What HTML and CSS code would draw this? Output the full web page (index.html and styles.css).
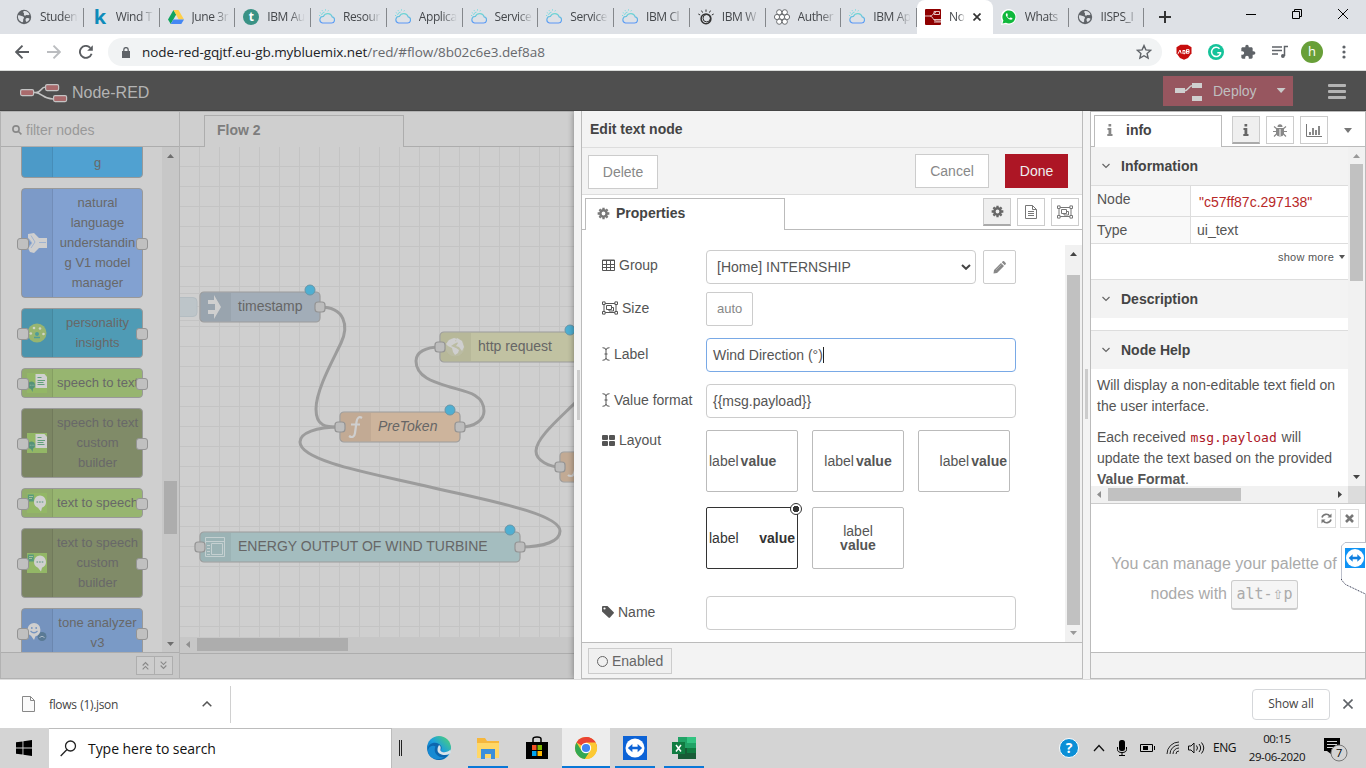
FILE: index.html
```html
<!DOCTYPE html>
<html lang="en">
<head>
<meta charset="utf-8">
<title>Node-RED</title>
<link rel="stylesheet" href="styles.css">
</head>
<body>
<svg class="defs" width="0" height="0" aria-hidden="true">
  <defs>
    <linearGradient id="cloudg" x1="0" y1="0" x2="0" y2="1"><stop offset="0" stop-color="#6fd6d3"/><stop offset="1" stop-color="#5a96f7"/></linearGradient>
    <linearGradient id="edgeg" x1="0" y1="1" x2="1" y2="0"><stop offset="0" stop-color="#0c59a4"/><stop offset=".5" stop-color="#1a9de0"/><stop offset="1" stop-color="#54d86a"/></linearGradient>
  </defs>
  <symbol id="globe" viewBox="0 0 16 16"><circle cx="8" cy="8" r="7.2" fill="#5f6368"/><path d="M2 6.500c1.500-1 3 .3 4.500.8s2 1.500 1 2.500.5 2.500-1 3.500c-3-.8-5-3.500-4.500-6.800zM7.500 2.200c2.500-.8 5 .8 6 3.300-1.500 1.500-2.500 0-3.500.8s-2.500.2-2-1.300-1.500-1.200-.5-2.800zM10 9.500c1.500-.8 3-.3 3.500.3-.5 1.700-1.500 2.700-3 3.200-.8-1-1.500-2.500-.5-3.500z" fill="#dee1e6"/></symbol>
  <symbol id="cloud" viewBox="0 0 16 16"><path d="M3.500 14h9a3.100 3.100 0 0 0 .7-6.100A4.700 4.700 0 0 0 4.500 7.300a3.400 3.400 0 0 0-1 6.700z" fill="none" stroke="url(#cloudg)" stroke-width="1.200"/><path d="M2.500 6a3.500 3.500 0 0 1 3-2.800M.8 3.500l1 .6M3 1.200l.7 1M6.500.3v1.300M9.500 1.300l-.7 1M0 6.500h1.200" stroke="#7cdbe0" fill="none"/></symbol>
  <symbol id="group" viewBox="0 0 16 14"><path d="M2 2.500h12v9H2z" fill="none" stroke="currentColor"/><path d="M4.500 4.500h5v4h-5zM10 6.500h1.500v3.500H7V9" fill="none" stroke="currentColor"/><path d="M.5.9h2.600v2.600H.5zM12.900.9h2.600v2.600h-2.600zM.5 10.500h2.600v2.600H.5zM12.900 10.500h2.600v2.600h-2.600z" fill="#fff" stroke="currentColor"/></symbol>
  <symbol id="cog" viewBox="0 0 14 14"><circle cx="7" cy="7" r="3.400" fill="none" stroke="currentColor" stroke-width="2.700"/><path d="M7 .7v2.300M.7 7H3M2.600 2.600L4 4M11.400 2.600L10 4M7 13.300v-2.300M13.300 7H11M11.400 11.400L10 10M2.600 11.400L4 10" stroke="currentColor" stroke-width="2.500"/></symbol>
  <symbol id="ibeam" viewBox="0 0 8 14"><path d="M.5.700Q4 .7 4 3v8q0 2.300-3.500 2.300M7.500.700Q4 .7 4 3M7.500 13.300Q4 13.300 4 11M2.500 7h3" fill="none" stroke="currentColor"/></symbol>
  <symbol id="info" viewBox="0 0 6 12"><path d="M1.500 0h2.700v2.400H1.500zM.5 4h3.800v6h1.200v2H.3v-2h1.200V6H.5z" fill="currentColor"/></symbol>
  <symbol id="chev" viewBox="0 0 10 6"><path d="M1.500 1L5 4.500 8.500 1" fill="none" stroke="currentColor" stroke-width="1.200"/></symbol>
  <symbol id="arrows" viewBox="0 0 24 24"><path d="M2.500 12l6-5.500v3.700h7V6.500l6 5.500-6 5.500v-3.700h-7v3.700z" fill="currentColor"/></symbol>
  <symbol id="doc" viewBox="0 0 20 20"><path d="M8.500 1h9L20 4v11H8.500z" fill="#d0d0d0"/><path d="M10.500 4.500h4M10.500 7.500h7.500M10.500 9.500h6M10.500 11.500h7" stroke="#62a07b"/><path d="M5 8.500a3.800 3.800 0 0 1 1 7.200L5.500 19l-1.500-3A3.800 3.800 0 0 1 5 8.500z" fill="#55937a"/><path d="M2.800 12.200h5" stroke="#9ab5a8" stroke-dasharray="1 .8"/></symbol>
  <symbol id="talk" viewBox="0 0 20 20"><path d="M.8 1.500h6v7h-6z" fill="#589b7b"/><path d="M2 3.500h4M2 5.500h3" stroke="#a7bc99"/><path d="M13 2.500a6.400 6.400 0 0 1 2 12.300L14 18.500l-3-3.700A6.400 6.400 0 0 1 13 2.500z" fill="#d0d0d0"/><path d="M9.500 9h7.500" stroke="#55937a" stroke-width="1.200" stroke-dasharray="1.600 1"/></symbol>
</svg>

<div class="tabs">
  <div class="tab"><svg><use href="#globe"/></svg><span>Studen</span></div>
  <div class="tab"><b class="kicon">k</b><span>Wind T</span></div>
  <div class="tab"><svg viewBox="0 0 16 16"><path d="M5.500 1L0 10.500 2.700 15 8.200 5.500z" fill="#11a45f"/><path d="M5.500 1h5L16 10.500h-5.300z" fill="#ffcf48"/><path d="M5.400 10.500H16L13.300 15H2.700z" fill="#4587f4"/></svg><span>June 3r</span></div>
  <div class="tab"><i class="ticon">t</i><span>IBM Au</span></div>
  <div class="tab"><svg><use href="#cloud"/></svg><span>Resour</span></div>
  <div class="tab"><svg><use href="#cloud"/></svg><span>Applica</span></div>
  <div class="tab"><svg><use href="#cloud"/></svg><span>Service</span></div>
  <div class="tab"><svg><use href="#cloud"/></svg><span>Service</span></div>
  <div class="tab"><svg><use href="#cloud"/></svg><span>IBM Cl</span></div>
  <div class="tab"><svg viewBox="0 0 16 16" fill="none" stroke="#333"><circle cx="8" cy="9.800" r="4.900" stroke-width="1.500"/><circle cx="8.700" cy="9.200" r="3.700"/><path d="M8 2.800V.5M4.600 3.600L3.500 1.600M11.400 3.600l1.100-2M2.200 6L.3 5M13.800 6l1.900-1"/></svg><span>IBM W</span></div>
  <div class="tab"><svg viewBox="0 0 16 16" fill="#fff" stroke="#6a6d70"><circle cx="5.200" cy="3.300" r="2.600"/><circle cx="10.800" cy="3.300" r="2.600"/><circle cx="3" cy="8" r="2.600"/><circle cx="13" cy="8" r="2.600"/><circle cx="5.200" cy="12.700" r="2.600"/><circle cx="10.800" cy="12.700" r="2.600"/><circle cx="8" cy="8" r="2.600"/></svg><span>Auther</span></div>
  <div class="tab"><svg><use href="#cloud"/></svg><span>IBM Ap</span></div>
  <div class="tab active"><svg viewBox="0 0 16 16"><rect width="16" height="16" rx="1" fill="#8f0000"/><path d="M0 7h5c3 0 3-3.500 6-3.500M5 7c3 0 3 5 6 5h5M9 2.500h5.500v3H9zM9 10.500h7M9 13h7" fill="none" stroke="#e6c4c4"/></svg><span class="short">No</span><svg class="x" viewBox="0 0 8 8"><path d="M.5.5l7 7M7.500.5l-7 7" stroke="#333" stroke-width="1.700"/></svg></div>
  <div class="tab"><svg viewBox="0 0 16 16"><path d="M0 16l1-4A7.800 7.800 0 1 1 4.500 15z" fill="#fff"/><path d="M1.500 14.500l.9-3.100a6.500 6.500 0 1 1 2.500 2.300z" fill="#10b83c"/><path d="M5.500 4.200c-1 .7-1 2.300.8 4.400s4 3 5.200 1.500l-.3-1-1.800-.7-.9.900c-1-.3-2-1.300-2.300-2.300l.7-.8-.7-1.900z" fill="#fff"/></svg><span>Whats</span></div>
  <div class="tab"><svg><use href="#globe"/></svg><span>IISPS_I</span></div>
  <svg class="plus" viewBox="0 0 12 12"><path d="M6 0v12M0 6h12" stroke="#333" stroke-width="2"/></svg>
  <div class="winbtns">
    <svg viewBox="0 0 10 10"><path d="M0 5.500h10" stroke="#000"/></svg>
    <svg viewBox="0 0 10 10" fill="none" stroke="#000"><path d="M.5 2.500h7v7h-7zM2.500 2.500v-2h7v7h-2"/></svg>
    <svg viewBox="0 0 10 10"><path d="M0 0l10 10M10 0L0 10" stroke="#000"/></svg>
  </div>
</div>

<div class="toolbar">
  <svg class="nav" viewBox="0 0 14 14" fill="none" stroke="#5a5d61" stroke-width="1.900"><path d="M14 7H1.500M7.500.7L1.200 7l6.300 6.300"/></svg>
  <svg class="nav" viewBox="0 0 14 14" fill="none" stroke="#bbbdc0" stroke-width="1.900"><path d="M0 7h12.500M6.500.7L12.800 7l-6.300 6.300"/></svg>
  <svg class="nav" viewBox="0 0 14 14" fill="none" stroke="#5a5d61" stroke-width="1.900"><path d="M12.600 8.800A6 6 0 1 1 11.300 2.800"/><path d="M13.800.2v5.600H8.200z" fill="#5a5d61" stroke="none"/></svg>
  <div class="omni">
    <svg class="lock" viewBox="0 0 8 11"><path d="M0 4h8v7H0z" fill="#5f6368"/><path d="M1.800 4V2.800a2.200 2.200 0 0 1 4.400 0V4" fill="none" stroke="#5f6368" stroke-width="1.300"/></svg>
    <span class="url">node-red-gqjtf.eu-gb.mybluemix.net<em>/red/#flow/8b02c6e3.def8a8</em></span>
    <svg class="star" viewBox="0 0 16 16"><path d="M8 1.600l1.900 4.300 4.700.5-3.500 3.100 1 4.600L8 11.700l-4.100 2.400 1-4.600L1.400 6.400l4.700-.5z" fill="none" stroke="#5f6368" stroke-width="1.400"/></svg>
  </div>
  <div class="exts">
    <svg viewBox="0 0 16 16"><path d="M4.500.8h7l4 2.500v6L12 14l-4 1.700L4 14 .5 9.300v-6z" fill="#c70d0d"/><path d="M2 9.800L4 6l1.200 3.500M7 6v4M7 6.500h2v3.200H7.500M10.500 5.500v4M10.500 5.700h2.500v3.500h-2.500M10.500 7.500h2.500" stroke="#fff" fill="none"/></svg>
    <svg viewBox="0 0 16 16"><circle cx="8" cy="8" r="8" fill="#15c39a"/><path d="M11.500 4.800A4.600 4.600 0 1 0 12.500 9.500V8.700H9.300" fill="none" stroke="#fff" stroke-width="1.500"/></svg>
    <svg viewBox="0 0 24 24"><path fill="#5f6368" d="M20.500 11H19V7c0-1.100-.9-2-2-2h-4V3.500C13 2.100 11.900 1 10.500 1S8 2.100 8 3.500V5H4c-1.100 0-2 .9-2 2v3.800h1.500c1.500 0 2.700 1.200 2.700 2.700S5 16.200 3.500 16.200H2V20c0 1.100.9 2 2 2h3.800v-1.500c0-1.500 1.200-2.700 2.700-2.700s2.700 1.200 2.700 2.700V22H17c1.100 0 2-.9 2-2v-4h1.500c1.400 0 2.500-1.100 2.500-2.500S21.900 11 20.500 11z"/></svg>
    <svg viewBox="0 0 16 16" fill="none" stroke="#5f6368" stroke-width="1.500"><path d="M0 3h10M0 6.500h10M0 10h6M12.500 12V2.500H16"/><circle cx="10.900" cy="12" r="1.900" fill="#5f6368" stroke="none"/></svg>
    <b class="avatar">h</b>
    <svg class="dots" viewBox="0 0 4 14" fill="#5f6368"><circle cx="2" cy="2" r="1.600"/><circle cx="2" cy="7" r="1.600"/><circle cx="2" cy="12" r="1.600"/></svg>
  </div>
</div>

<header class="nrhead">
  <svg class="logo" viewBox="0 0 48 20"><g fill="none" stroke="#c4c4c4" stroke-width="1.200"><path d="M14 9.500h2c6 0 4-5.500 10-5.500M15 9.500c7 0 8 6.500 18 6.500" stroke-width="1.600"/><g fill="#a96a6c"><rect x=".6" y="6.600" width="13" height="6" rx="1.500"/><rect x="25.600" y="1.600" width="13" height="6" rx="1.500"/><rect x="33.600" y="12.600" width="13" height="6" rx="1.500"/></g></g></svg>
  <span class="brand">Node-RED</span>
  <button class="deploy"><svg viewBox="0 0 27 18"><path d="M0 5h10v5H0zM17 0h10v5H17zM17 13h10v5H17z" fill="#cfcfcf"/><path d="M9 8c5 0 4-5.500 9-5.500" fill="none" stroke="#cfcfcf" stroke-width="1.300"/></svg><span>Deploy</span><i class="caret"></i></button>
  <div class="burger"><i></i><i></i><i></i></div>
</header>

<main class="work">
  <section class="palette">
    <div class="filter"><svg viewBox="0 0 10 10" fill="none" stroke="#888" stroke-width="1.600"><circle cx="4" cy="4" r="3.100"/><path d="M6.200 6.200l3.200 3.200"/></svg>filter nodes</div>
    <div class="pbody">
      <div class="plist">
        <div class="pn c0"><i></i><p><br>g</p></div>
        <div class="pn c1 port"><i><svg viewBox="0 0 20 20"><path d="M1 1l6-1 5 5h8v10h-8l-5 5-4-1-2-4 4-5-4-5z" fill="#cfcfcf"/><path d="M1 5l4 5-4 5M4 2.500L8 9l-4 6M12 9.500h7" stroke="#9fb3d1" fill="none"/></svg></i><p>natural<br>language<br>understandin<br>g V1 model<br>manager</p></div>
        <div class="pn c2 port"><i><svg viewBox="0 0 20 20"><circle cx="10" cy="10" r="9.500" fill="#97b570"/><g fill="#cfd5c5"><circle cx="7" cy="5" r="1.300"/><circle cx="13" cy="5.500" r="1.300"/><circle cx="3.800" cy="10.500" r="1.300"/><circle cx="16.500" cy="11" r="1.300"/></g><circle cx="10" cy="11" r="2" fill="#509c99"/><path d="M7 14.500h6" stroke="#509c99" stroke-width="1.500"/></svg></i><p>personality<br>insights</p></div>
        <div class="pn c3 port"><i><svg class="g"><use href="#doc"/></svg></i><p>speech to text</p></div>
        <div class="pn c4 port"><i><svg class="g"><use href="#doc"/></svg></i><p>speech to text<br>custom<br>builder</p></div>
        <div class="pn c3 port"><i><svg class="g"><use href="#talk"/></svg></i><p>text to speech</p></div>
        <div class="pn c4 port"><i><svg class="g"><use href="#talk"/></svg></i><p>text to speech<br>custom<br>builder</p></div>
        <div class="pn c5 port"><i><svg viewBox="0 0 20 20"><circle cx="15" cy="13.500" r="4.500" fill="#5a7a95"/><path d="M12.500 14.500q2.500-2.500 5 0" stroke="#a9b8c6" fill="none"/><path d="M7 0a6.800 6.800 0 0 1 1.500 13.300L7 17l-3-4.300A6.800 6.800 0 0 1 7 0z" fill="#cfcfcf"/><circle cx="4.800" cy="5" r=".9" fill="#7795bf"/><circle cx="9.200" cy="5" r=".9" fill="#7795bf"/><path d="M3.500 8q3.500 3.500 7 0" fill="none" stroke="#7795bf" stroke-width="1.200"/></svg></i><p>tone analyzer<br>v3</p></div>
      </div>
      <div class="vbar dim"><i class="up"></i><b class="pthumb"></b><i class="down"></i></div>
    </div>
    <div class="pfoot"><svg viewBox="0 0 18 18"><path d="M6 9l3-3 3 3M6 13l3-3 3 3"/></svg><svg viewBox="0 0 18 18"><path d="M6 5l3 3 3-3M6 9l3 3 3-3"/></svg></div>
  </section>

  <section class="flow">
    <div class="ftabs"><b>Flow 2</b></div>
    <svg class="canvas" viewBox="180 147 394 490" width="394" height="490">
      <defs><pattern id="grid" width="20" height="20" patternUnits="userSpaceOnUse" x="199" y="166"><path d="M.5 0v20M0 .5h20" stroke="#c4c4c4"/></pattern></defs>
      <rect x="180" y="147" width="394" height="490" fill="url(#grid)"/>
      <g fill="none" stroke="#9c9c9c" stroke-width="3">
        <path d="M320 307C345 307 349 326 341 343S316 390 316 409S328 427 340 427"/>
        <path d="M460 427C476 427 484 419 484 411C484 393 463 391 450 387S416 378 416 361C416 352 426 347 440 347"/>
        <path d="M520 547C545 547 560 541 560 531C560 513 480 499 430 487S300 462 300 442C300 433 316 427 340 427"/>
        <path d="M576 402C560 418 536 438 536 451C536 461 550 467 560 467"/>
      </g>
      <rect x="170" y="297.500" width="27" height="19" rx="4" fill="#bdc5c9" stroke="#b4bdc2"/><path d="M180 293.500h20M180 320.500h20" stroke="#c4c4c4"/>
      <g stroke="#9c9c9c" stroke-width="1.200">
        <rect x="200" y="292" width="120" height="30" rx="4" fill="#a2adb8"/>
        <rect x="340" y="412" width="120" height="30" rx="4" fill="#cdb49c"/>
        <rect x="440" y="332" width="160" height="30" rx="4" fill="#c1c2a2"/>
        <rect x="560" y="452" width="60" height="30" rx="4" fill="#cdb49c"/>
        <rect x="200" y="532" width="320" height="30" rx="4" fill="#a4bdbf"/>
      </g>
      <g fill="#000" fill-opacity=".05"><path d="M201 293h29v28h-29zM341 413h29v28h-29zM441 333h29v28h-29zM561 453h13v28h-13zM201 533h29v28h-29z"/></g>
      <path d="M230.500 293v28M370.500 413v28M470.500 333v28M230.500 533v28" stroke="#000" stroke-opacity=".05"/>
      <g fill="#cfcfcf">
        <path d="M208 300h6v-5l7 12-7 12v-5h-6v-4h7v-6h-7z"/>
        <circle cx="455" cy="347" r="9.500" fill-opacity=".2"/><path d="M446 344l3-4 5-2 3 1-2 2 3 1-4 2-3 2 5 2 3 2-1 3-3 2-2-3-1-4-4-2zM457 338l5 3 2 6-2 4-3-4-3-1 2-3-2-2z"/>
      </g>
      <g fill="none" stroke="#cfcfcf" stroke-width="2.200"><path d="M362 418c-3-2-5 0-5.500 4l-1.500 11c-.5 4-3 5-6 3M351 424.500h9"/><path d="M576 464c-1 6-1 12-5 12q-2 0-3-1"/></g>
      <g fill="none" stroke="#c5d0d1"><path d="M205.500 537.500h19v19h-19zM205 541.500h20M211.500 543.500h11v11h-11zM207 545.500h3M207 548.500h3M207 551.500h3M207 554.500h3"/></g>
      <g fill="#bdbdbd" stroke="#949494" stroke-width="1.200">
        <rect x="315" y="302" width="10" height="10" rx="3"/><rect x="335" y="422" width="10" height="10" rx="3"/><rect x="455" y="422" width="10" height="10" rx="3"/><rect x="435" y="342" width="10" height="10" rx="3"/><rect x="555" y="462" width="10" height="10" rx="3"/><rect x="195" y="542" width="10" height="10" rx="3"/><rect x="515" y="542" width="10" height="10" rx="3"/>
      </g>
      <g fill="#4eafd2" stroke="#6896a8"><circle cx="310" cy="290" r="5"/><circle cx="450" cy="410" r="5"/><circle cx="570" cy="330" r="5"/><circle cx="510" cy="530" r="5"/></g>
      <g class="nlabels"><text x="238" y="311">timestamp</text><text x="378" y="431" font-style="italic">PreToken</text><text x="478" y="351">http request</text><text x="238" y="551">ENERGY OUTPUT OF WIND TURBINE</text></g>
    </svg>
    <div class="hbar dim"><i class="left"></i><b class="fthumb"></b></div>
    <div class="ffoot"></div>
  </section>

  <div class="grip"><i></i></div>

  <section class="tray">
    <h2>Edit text node</h2>
    <div class="tbtns"><button>Delete</button><button class="cancel">Cancel</button><button class="done">Done</button></div>
    <div class="ttabs">
      <div class="ptab"><svg viewBox="0 0 14 14"><use href="#cog"/></svg>Properties</div>
      <div class="tools">
        <span class="on"><svg width="13" height="13"><use href="#cog"/></svg></span>
        <span><svg width="12" height="14" viewBox="0 0 12 14" fill="none" stroke="#777"><path d="M.5.5h7l4 4v9H.5zM7.500.5v4h4M3 6.500h6M3 8.500h6M3 10.500h6"/></svg></span>
        <span><svg width="16" height="14"><use href="#group"/></svg></span>
      </div>
    </div>
    <div class="tbody">
      <form class="form">
        <div class="row"><label><svg width="13" height="12" viewBox="0 0 13 12"><path d="M.5 1h12v10.500H.5zM0 1.500h13M.5 5.500h12M.5 8.500h12M4.500 1v10M8.500 1v10" fill="none" stroke="#555"/></svg>Group</label><div class="box select">[Home] INTERNSHIP<svg viewBox="0 0 10 6"><path d="M1 1l4 3.800L9 1" fill="none" stroke="#444" stroke-width="2"/></svg></div><div class="box pencil"><svg width="13" height="13" viewBox="0 0 13 13"><path d="M1 9l7-7 3 3-7 7-3.500.500zM8.800 1.300l1-1q.7-.5 1.300 0l1.600 1.600q.5.600 0 1.300l-1 1z" fill="#888"/><path d="M3 9l5.500-5.500" stroke="#bbb" stroke-width=".7"/></svg></div></div>
        <div class="row size"><label><svg width="16" height="14"><use href="#group"/></svg>Size</label><div class="box auto">auto</div></div>
        <div class="row"><label><svg width="8" height="14"><use href="#ibeam"/></svg>Label</label><div class="box input focus">Wind Direction (°)<i></i></div></div>
        <div class="row"><label><svg width="8" height="14"><use href="#ibeam"/></svg>Value format</label><div class="box input">{{msg.payload}}</div></div>
        <div class="row lay"><label><svg width="13" height="11" viewBox="0 0 13 11" fill="#555"><rect width="6" height="5" rx="1"/><rect x="7" width="6" height="5" rx="1"/><rect y="6" width="6" height="5" rx="1"/><rect x="7" y="6" width="6" height="5" rx="1"/></svg>Layout</label>
          <div class="layouts">
            <div><span>label</span><b>value</b></div><div class="mid"><span>label</span><b>value</b></div><div class="end"><span>label</span><b>value</b></div>
            <div class="sel"><span>label</span><b>value</b><i></i></div><div class="stack"><span>label</span><b>value</b></div>
          </div></div>
        <div class="row"><label><svg width="12" height="12" viewBox="0 0 12 12"><path d="M0 1q0-1 1-1h4.500l6 6q1 .8 0 1.600L8 11.500q-.8.800-1.500 0L0 5.500z" fill="#555"/><circle cx="2.500" cy="2.500" r="1.100" fill="#fff"/></svg>Name</label><div class="box input"></div></div>
      </form>
      <div class="vbar tscroll"><i class="up dark"></i><b></b><i class="down mutedarrow"></i></div>
    </div>
    <div class="tfoot"><span><i></i>Enabled</span></div>
  </section>

  <div class="grip right"><i></i></div>

  <aside class="side">
    <div class="stabs">
      <div class="itab"><svg width="6" height="12"><use href="#info"/></svg>info</div>
      <div class="tools">
        <span class="on"><svg width="6" height="12"><use href="#info"/></svg></span>
        <span><svg width="14" height="13" viewBox="0 0 14 13"><path d="M4.500 3a2.500 2.700 0 0 1 5 0z" fill="#888"/><path d="M3 4h8v6q-1 2.500-4 2.500T3 10z" fill="#888"/><path d="M1 2.500L4 5M13 2.500L10 5M0 7.500h14M1 12.500l3-3M13 12.500l-3-3" stroke="#888" stroke-width="1.200"/><path d="M7 5v7" stroke="#fff"/></svg></span>
        <span><svg width="16" height="13" viewBox="0 0 16 13"><path d="M.5 0v12.500H16" fill="none" stroke="#777"/><path d="M4 11V8M7 11V4M10 11V6M13 11V2" stroke="#888" stroke-width="2"/></svg></span>
        <i class="caret"></i>
      </div>
    </div>
    <div class="sbody">
      <div class="scontent">
        <h3 class="first"><svg><use href="#chev"/></svg>Information</h3>
        <div class="kv"><span>Node</span><span class="red">"c57ff87c.297138"</span></div>
        <div class="kv type"><span>Type</span><span>ui_text</span></div>
        <div class="more">show more<i></i></div>
        <h3><svg><use href="#chev"/></svg>Description</h3>
        <h3 class="help"><svg><use href="#chev"/></svg>Node Help</h3>
        <div class="text"><p>Will display a non-editable text field on<br>the user interface.</p><p>Each received <code>msg.payload</code> will<br>update the text based on the provided<br><b>Value Format</b>.</p></div>
      </div>
      <div class="vbar sscroll"><i class="up mutedarrow"></i><b></b><i class="down dark"></i></div>
    </div>
    <div class="hbar shs"><i class="left"></i><b></b><i class="right"></i><u></u></div>
    <div class="tips">
      <div class="tipbtns"><span><svg width="11" height="11" viewBox="0 0 11 11" fill="none" stroke="#777" stroke-width="1.600"><path d="M1 4.500a4.500 4.500 0 0 1 8-1.300M10 6.500a4.500 4.500 0 0 1-8 1.300"/><path d="M10.500.5v4h-4zM.5 10.500v-4h4z" fill="#777" stroke="none"/></svg></span><span><svg width="9" height="9" viewBox="0 0 9 9"><path d="M1 1l7 7M8 1L1 8" stroke="#777" stroke-width="2.600"/></svg></span></div>
      <p>You can manage your palette of<br>nodes with <kbd>alt-<span>⇧</span>p</kbd></p>
    </div>
    <div class="sfoot"></div>
  </aside>
  <div class="tv"><svg width="25" height="53" viewBox="0 0 25 53"><path d="M26 .5H4L.5 4v34l4 4.500 21 10" fill="#fff" stroke="#bcc0cc"/><path d="M.5 37v1l4 4.500 21 10" fill="none" stroke="#445" stroke-dasharray="1 2"/><rect x="4" y="6" width="20" height="20" fill="#0f93f5"/><circle cx="14" cy="16" r="9" fill="#fff"/><use href="#arrows" x="6" y="8" width="16" height="16" color="#1180e0"/></svg></div>
</main>

<div class="dl">
  <div class="file"><svg width="13" height="16" viewBox="0 0 13 16"><path d="M.5.5h8l4 4v11H.5zM8.500.5v4h4" fill="#fafafa" stroke="#888"/></svg><span>flows (1).json</span><svg class="upc" viewBox="0 0 10 6"><path d="M.7 5.300L5 1l4.300 4.300" fill="none" stroke="#555" stroke-width="1.500"/></svg></div>
  <div class="showall">Show all</div>
  <svg class="dx" viewBox="0 0 10 10"><path d="M.5.5l9 9M9.500.5l-9 9" stroke="#5f6368" stroke-width="1.600"/></svg>
</div>

<footer class="taskbar">
  <div class="start"><svg width="16" height="16" viewBox="0 0 16 16"><path d="M0 2.300L6.500 1.400v6.100H0zM7.400 1.300L16 0v7.500H7.400zM0 8.400h6.500v6.200L0 13.700zM7.400 8.400H16V16l-8.600-1.200z"/></svg></div>
  <div class="search"><svg width="17" height="17" viewBox="0 0 17 17" fill="none" stroke="#222" stroke-width="1.300"><circle cx="10.500" cy="6" r="5"/><path d="M7 9.500L.7 16"/></svg>Type here to search</div>
  <div class="handle"></div>
  <div class="apps">
    <span><svg viewBox="0 0 24 24"><circle cx="12" cy="12" r="12" fill="url(#edgeg)"/><path d="M1 15C0 8 7 5 12 8c3 2 3 4 2 6 0 2 3 3.500 9 1.500-3 8-12 11-17 6-3-3-2-8 1-10" fill="#0c66ae"/><path d="M8.500 10.500c-3 6 3 12 9 10.500-6 4.500-17 2-16.500-7C2 9.500 7 9 8.500 10.500z" fill="#168ad3"/><path d="M12 9c3 2 1 4 1.500 5.500 1 2.500 7 2.500 10-1 1 4 0 3-1 4.500-4 2-12 1-12-4 0-2 .5-3.500 1.500-5z" fill="#d8e4ea"/></svg></span>
    <span class="run"><svg viewBox="0 0 24 24"><path d="M1 2h8l2 3h12v16H1z" fill="#f6b73c"/><path d="M1 7h22v15H1z" fill="#ffd767"/><path d="M5 13h14v10h-4v-5H9v5H5z" fill="#3b8fdb"/></svg></span>
    <span><svg viewBox="0 0 24 24"><path d="M1 6h22v17H1z"/><path d="M8 6V3q0-2 4-2t4 2v3" fill="none" stroke="#000" stroke-width="1.500"/><path d="M7 9h4.500v5H7z" fill="#f25022"/><path d="M12.500 9H17v5h-4.500z" fill="#7fba00"/><path d="M7 15h4.500v5H7z" fill="#00a4ef"/><path d="M12.500 15H17v5h-4.500z" fill="#ffb900"/></svg></span>
    <span class="run cur"><svg viewBox="0 0 24 24"><circle cx="12" cy="12" r="11" fill="#fcc934"/><path d="M12 12H23A11 11 0 0 0 2.500 6.500z" fill="#ea4335"/><path d="M12 1a11 11 0 0 1 9.500 5.500H12z" fill="#ea4335"/><path d="M2.500 6.500A11 11 0 0 0 11 23l5.500-8.500H7.500z" fill="#34a853"/><path d="M21.500 6.500H12l4.500 8L11 23A11 11 0 0 0 21.500 6.500z" fill="#fcc934"/><circle cx="12" cy="12" r="5.200" fill="#fff"/><circle cx="12" cy="12" r="4.100" fill="#4285f4"/></svg></span>
    <span class="run"><svg viewBox="0 0 24 24"><path d="M0 0h24v24H0z" fill="#0d63d6"/><circle cx="12" cy="12" r="9.500" fill="#fff"/><use href="#arrows" x="3" y="3" width="18" height="18" color="#0d63d6"/></svg></span>
    <span class="run"><svg viewBox="0 0 24 24"><path d="M6 1h9v11H6z" fill="#21a366"/><path d="M15 1h9v6h-9z" fill="#33c481"/><path d="M15 7h9v6h-9z" fill="#21a366"/><path d="M6 12h18v11H6z" fill="#185c37"/><path d="M15 12h9v5h-9z" fill="#107c41"/><path d="M0 6h13v12H0z" fill="#107c41"/><path d="M4 9l5 6.500M9 9l-5 6.500" stroke="#fff" stroke-width="1.500"/></svg></span>
  </div>
  <div class="systray">
    <b class="q">?</b>
    <svg width="12" height="8" viewBox="0 0 12 8" class="t1"><path d="M1 7l5-5.500L11 7" fill="none" stroke="#111" stroke-width="1.300"/></svg>
    <svg width="12" height="16" viewBox="0 0 12 16" class="t2"><rect x="3" width="6" height="11" rx="2.500"/><path d="M1.500 7v2.500q0 3 4.500 3t4.500-3V7M6 12.500v3M3 15.500h6" fill="none" stroke="#000"/></svg>
    <svg width="16" height="10" viewBox="0 0 16 10" class="t3"><path d="M.5 1.500h12v7H.5zM14.500 3v4" fill="none" stroke="#000"/><path d="M3 3h5v4H3z"/></svg>
    <svg width="14" height="14" viewBox="0 0 14 14" class="t4" fill="none" stroke="#222"><path d="M1 13A12 12 0 0 1 13 1M4 13a9 9 0 0 1 9-9M7 13a6 6 0 0 1 6-6M10 13a3 3 0 0 1 3-3"/></svg>
    <svg width="17" height="14" viewBox="0 0 17 14" class="t5" fill="none" stroke="#111"><path d="M.5 5h2.500l3-3v10l-3-3H.5zM8.500 4.500q2 2.500 0 5M11 3q3.300 4 0 8M13.500 1.500q4.500 5.500 0 11"/></svg>
    <span class="lang">ENG</span>
    <span class="clock">00:15<br>29-06-2020</span>
    <svg width="24" height="26" viewBox="0 0 24 26" class="t6"><path d="M0 2h16v13H7v3l-4-3H0z"/><path d="M3 5.500h10M3 8.500h10M3 11.500h7" stroke="#d4d4d4"/><circle cx="15" cy="17" r="8" fill="#d4d4d4" stroke="#777"/><text x="12" y="21" font-size="11" font-family="Open Sans, sans-serif">7</text></svg>
  </div>
</footer>
</body>
</html>
```
FILE: styles.css
```css
* { box-sizing: border-box; }
body { margin: 0; width: 1366px; height: 768px; overflow: hidden; display: flex; flex-direction: column; font: 14px/20px "Liberation Sans", Arial, sans-serif; color: #555; background: #fff; }
svg { display: block; flex: none; }
.defs { position: absolute; }
i, em { font-style: normal; }
p, h2, h3 { margin: 0; }
button { font: inherit; }

/* browser chrome */
.tabs { height: 34px; flex: none; background: #dee1e6; display: flex; padding-left: 8px; font: 12px/34px "Open Sans", sans-serif; color: #45484c; }
.tab { width: 75.75px; flex: none; display: flex; align-items: center; padding-left: 8px; position: relative; }
.tab::after { content: ""; position: absolute; right: 0; top: 8px; width: 1px; height: 19px; background: #84878b; }
.tab > svg { width: 16px; height: 16px; }
.tab > span { margin-left: 8px; width: 38px; white-space: nowrap; letter-spacing: -.4px; -webkit-mask-image: linear-gradient(90deg, #000 60%, transparent); }
.kicon { width: 16px; font: bold 20px/32px "Open Sans", sans-serif; color: #0d8bba; padding-left: 2px; }
.ticon { width: 16px; height: 16px; border-radius: 50%; background: #3a9285; color: #fff; text-align: center; font: bold 12px/15px "Open Sans", sans-serif; }
.tab.active { background: #fff; border-radius: 8px 8px 0 0; }
.tab.active::after { display: none; }
.tab > .short { width: 16px; }
.tab > svg.x { width: 8px; height: 8px; margin-left: 8px; }
.plus { width: 12px; height: 12px; margin: 11px 0 0 15px; }
.winbtns { margin-left: auto; display: flex; gap: 36px; padding: 9px 18px 0 0; }
.winbtns svg { width: 10px; height: 10px; }
.toolbar { height: 37px; flex: none; display: flex; align-items: center; padding-left: 15px; border-bottom: 1px solid #d9dbd9; }
.nav { width: 14px; height: 14px; margin-right: 18px; }
.omni { width: 1054px; height: 28px; margin-left: -3px; border-radius: 14px; background: #f1f3f4; display: flex; align-items: center; padding: 0 10px 0 14px; }
.lock { width: 8px; height: 11px; }
.url { margin-left: 12px; font: 13.500px/28px "Open Sans", sans-serif; color: #202124; letter-spacing: -.065px; }
.url em { color: #67696d; }
.star { width: 16px; height: 16px; margin-left: auto; }
.exts { display: flex; align-items: center; gap: 16px; margin-left: 14px; }
.exts svg { width: 16px; height: 16px; }
.avatar { width: 22px; height: 22px; border-radius: 50%; background: #689f38; color: #fff; font: 13px/21px "Open Sans", sans-serif; text-align: center; margin-left: -3px; }
.exts .dots { width: 4px; height: 14px; margin-left: 3px; }

/* editor header */
.nrhead { height: 40px; flex: none; background: #4f4f4f; border-bottom: 1px solid #444; display: flex; align-items: center; color: #b4b4b4; }
.logo { width: 48px; height: 20px; margin: 4px 0 0 20px; }
.brand { font-size: 16px; margin: 4px 0 0 4px; }
.deploy { margin-left: auto; width: 130px; height: 30px; padding: 0; border: 0; background: #97565f; color: #bfbfbf; display: flex; align-items: center; }
.deploy svg { width: 27px; height: 18px; margin: 2px 11px 0 12px; }
.caret { display: block; width: 9px; height: 5px; clip-path: polygon(0 0, 100% 0, 50% 100%); background: #777; }
.deploy .caret { background: #c9c9c9; margin-left: 20px; }
.burger { margin: 1px 20px 0 35px; width: 18px; }
.burger i { display: block; height: 3px; background: #b4b4b4; margin: 3px 0; border-radius: 1px; }

/* workspace */
.work { flex: 1; min-height: 0; display: flex; position: relative; border-bottom: 1px solid #ddd; }
.palette { width: 180px; flex: none; background: #cfcfcf; border: 1px solid #b2b2b2; display: flex; flex-direction: column; }
.filter { height: 35px; border-bottom: 1px solid #adadad; display: flex; align-items: center; gap: 4px; padding: 1px 0 0 11px; color: #999; font-size: 14px; }
.filter svg { width: 10px; height: 10px; }
.pbody { flex: 1; min-height: 0; display: flex; overflow: hidden; }
.plist { width: 161px; padding-left: 20px; margin-top: -19px; display: flex; flex-direction: column; gap: 10px; }
.pn { width: 122px; flex: none; position: relative; display: flex; border: 1px solid #999; border-radius: 4px; color: #686868; text-align: center; }
.pn > i { width: 31px; flex: none; background: rgba(0,0,0,.04); border-right: 1px solid rgba(0,0,0,.08); display: flex; align-items: center; padding-left: 5px; }
.pn > i svg { width: 20px; height: 20px; }
.pn > i svg.g { background: #93b766; }
.pn p { width: 89px; padding: 4px 0; white-space: nowrap; font-size: 13px; letter-spacing: .02px; }
.port::before, .port::after { content: ""; position: absolute; top: calc(50% - 5px); width: 10px; height: 10px; background: #c0c0c0; border: 1px solid #949494; border-radius: 3px; left: -5px; }
.port::after { left: auto; right: -6px; }
.c0 { background: #50a1d1; } .c1 { background: #82a1d1; } .c2 { background: #4f9bb5; } .c3 { background: #97b570; } .c4 { background: #808b68; } .c5 { background: #7a9ac6; }
.vbar { width: 17px; flex: none; background: #f1f1f1; display: flex; flex-direction: column; align-items: center; margin-left: auto; }
.vbar b { width: 13px; background: #c1c1c1; }
.up, .down { width: 7px; height: 4px; background: #6e6e6e; clip-path: polygon(50% 0, 100% 100%, 0 100%); }
.down { clip-path: polygon(0 0, 100% 0, 50% 100%); margin-top: auto; }
.dim { background: #c7c7c7; }
.dim b { background: #adadad; }
.palette .up { margin-top: 7px; }
.palette .down { margin-bottom: 6px; }
.pthumb { height: 53px; margin-top: 323px; }
.pfoot { height: 26px; flex: none; background: #c7c7c7; border-top: 1px solid #adadad; display: flex; justify-content: flex-end; padding: 3px 6px 0 0; }
.pfoot svg { width: 19px; height: 19px; border: 1px solid #aeaeae; background: #cdcdcd; margin-left: -1px; fill: none; stroke: #888; stroke-width: 1.200; }
.flow { width: 394px; flex: none; background: #cfcfcf; border-top: 1px solid #b2b2b2; display: flex; flex-direction: column; }
.ftabs { height: 35px; border-bottom: 1px solid #adadad; padding: 3px 0 0 24px; flex: none; }
.ftabs b { display: block; width: 200px; height: 32px; border: 1px solid #adadad; border-bottom: 0; background: #cfcfcf; padding: 4px 12px; color: #7d7d7d; }
.canvas { flex: none; }
.nlabels { font: 14px "Liberation Sans", Arial, sans-serif; fill: #666; }
.hbar { height: 16px; flex: none; display: flex; align-items: center; }
.left, .right { width: 4px; height: 7px; background: #8f8f8f; clip-path: polygon(100% 0, 100% 100%, 0 50%); }
.right { clip-path: polygon(0 0, 100% 50%, 0 100%); background: #444; }
.flow .left { margin-left: 6px; }
.flow .hbar { padding-bottom: 1px; }
.fthumb { width: 151px; height: 13px; margin-left: 7px; }
.ffoot { flex: 1; background: #c7c7c7; border: solid #adadad; border-width: 1px 0; }
.grip { width: 8px; flex: none; background: #f3f3f3; border-right: 1px solid #bbb; display: flex; align-items: center; padding-left: 3px; box-shadow: 0 0 6px rgba(0,0,0,.4); clip-path: inset(0 0 0 -8px); position: relative; }
.grip i { width: 3px; height: 50px; background: #ccc; }
.grip.right { width: 7px; height: auto; border: 0; clip-path: none; box-shadow: none; background: #f3f3f3; padding: 0 0 3px 2px; }

/* edit tray */
.tray { width: 501px; flex: none; background: #fff; border-right: 1px solid #bbb; border-bottom: 1px solid #bbb; display: flex; flex-direction: column; }
.tray h2 { height: 37px; flex: none; background: #f3f3f3; border-bottom: 1px solid #ddd; font: bold 14px/36px "Liberation Sans", sans-serif; color: #444; padding-left: 8px; }
.tbtns { height: 47px; flex: none; background: #f3f3f3; border-bottom: 1px solid #ddd; display: flex; padding: 6px 14px 0 6px; }
.tbtns button { width: 70px; height: 34px; background: #fff; border: 1px solid #ccc; color: #888; padding: 0; margin-top: 1px; }
.tbtns .cancel { width: 74px; margin: 0 16px 0 auto; }
.tbtns .done { width: 63px; margin: 0; background: #ad1625; border: 0; color: #eee; }
.ttabs { height: 35px; flex: none; border-bottom: 1px solid #bbb; display: flex; justify-content: space-between; padding: 3px 3px 0; }
.ptab { width: 200px; height: 32px; border: 1px solid #bbb; border-bottom: 0; background: #fff; display: flex; align-items: center; gap: 6px; padding: 0 0 3px 11px; font-weight: bold; color: #444; }
.ptab svg { width: 13px; height: 13px; color: #777; }
.tools { display: flex; gap: 6px; }
.tools span { width: 28px; height: 28px; border: 1px solid #ccc; display: flex; align-items: center; justify-content: center; color: #777; }
.tools .on { background: #efefef; border-bottom: 2px solid #aaa; color: #666; }
.tbody { flex: 1; min-height: 0; display: flex; }
.form { margin: 0; padding: 20px 0 0 20px; width: 440px; }
.row { display: flex; height: 34px; margin-bottom: 12px; }
.row:first-child { margin-bottom: 8px; }
.row label { width: 104px; display: flex; align-items: center; gap: 4px; height: 32px; white-space: nowrap; }
.row:first-child label { height: 30px; }
.box { height: 34px; border: 1px solid #ccc; border-radius: 4px; padding: 6px; white-space: nowrap; }
.select { width: 270px; padding-left: 10px; display: flex; justify-content: space-between; align-items: center; padding-right: 4px; }
.select svg { width: 10px; height: 6px; }
.pencil { width: 33px; margin-left: 7px; border-radius: 2px; padding: 10px 9px; }
.auto { width: 47px; border-radius: 2px; color: #888; padding: 6px 10px; font-size: 13px; }
.input { width: 310px; display: flex; }
.focus { border-color: #79a9e6; }
.focus i { width: 1px; height: 16px; margin-top: 2px; background: #222; }
.row.lay { height: 139px; margin-bottom: 27px; }
.lay label { height: 20px; }
.layouts { display: grid; grid-template-columns: repeat(3, 92px); gap: 15px 14px; grid-auto-rows: 62px; }
.layouts > div { border: 1px solid #bbb; border-radius: 2px; padding: 0 2px; display: flex; gap: 2px; align-items: center; position: relative; line-height: 14px; }
.layouts .mid { justify-content: center; }
.layouts .end { justify-content: flex-end; }
.layouts .sel { border-color: #333; color: #333; justify-content: space-between; }
.layouts .sel i { position: absolute; right: -5px; top: -5px; width: 12px; height: 12px; border: 1px solid #333; border-radius: 50%; background: radial-gradient(#333 0 3px, #fff 3.500px); }
.layouts .stack { flex-direction: column; justify-content: center; gap: 0; padding-bottom: 1px; }
.tscroll { margin-top: 15px; }
.tscroll b { width: 13px; height: 350px; margin-top: 19px; }
.up.dark, .down.dark { background: #444; }
.mutedarrow { background: #999; }
.tscroll .up { margin-top: 7px; }
.tscroll .down { margin-bottom: 7px; }
.tfoot { height: 36px; flex: none; background: #f3f3f3; border-top: 1px solid #bbb; padding: 5px 6px; }
.tfoot span { width: 84px; height: 26px; border: 1px solid #ccc; display: flex; align-items: center; gap: 4px; padding-left: 8px; background: #f0f0f0; color: #666; }
.tfoot i { width: 11px; height: 11px; border: 1px solid #666; border-radius: 50%; }

/* sidebar */
.side { flex: 1; min-width: 0; border: 1px solid #bbb; display: flex; flex-direction: column; }
.side .first, .stabs { flex: none; }
.stabs { height: 35px; border-bottom: 1px solid #bbb; display: flex; padding: 3px 0 0 3px; }
.itab { width: 128px; height: 32px; border: 1px solid #bbb; border-bottom: 0; background: #fff; display: flex; align-items: center; gap: 13px; padding: 0 0 3px 12px; font-weight: bold; color: #444; }
.itab svg { color: #888; }
.stabs .tools { margin: 1px 0 0 10px; }
.stabs .caret { margin: 12px 0 0 10px; width: 8px; }
.sbody { height: 339px; flex: none; display: flex; overflow: hidden; }
.scontent { width: 257px; }
.side h3 { height: 39px; border-top: 1px solid #ddd; background: #f3f3f3; font: bold 14px/38px "Liberation Sans", sans-serif; color: #444; display: flex; align-items: center; gap: 10px; padding-left: 10px; }
.side h3 svg { width: 10px; height: 6px; color: #666; }
.side .first { height: 38px; border-top: 0; }
.side .help { margin-top: 12px; }
.kv { display: flex; border-top: 1px solid #ddd; height: 31px; line-height: 26px; }
.kv span { width: 157px; padding-left: 6px; }
.kv span:first-child { width: 100px; background: #f9f9f9; border-right: 1px solid #ddd; }
.kv .red { color: #b72828; padding: 3px 0 0 8px; }
.kv.type { height: 28px; border-bottom: 1px solid #ddd; }
.more { height: 35px; font-size: 11px; letter-spacing: .25px; line-height: 26px; display: flex; justify-content: flex-end; gap: 5px; padding-right: 3px; }
.more i { width: 6px; height: 4px; background: #555; clip-path: polygon(0 0, 100% 0, 50% 100%); margin-top: 11px; }
.text { padding: 6px 0 0 6px; line-height: 21px; white-space: nowrap; }
.text p { margin-bottom: 10px; }
code { font: 13px "DejaVu Sans Mono", monospace; color: #ad1625; padding: 0 1px; }
.sscroll .up { margin-top: 7px; }
.sscroll b { height: 117px; margin-top: 6px; }
.sscroll .down { margin-bottom: 7px; }
.shs { height: 17px; background: #f1f1f1; padding-left: 6px; }
.shs b { width: 133px; height: 13px; background: #c1c1c1; margin-left: 7px; }
.grip.right, .hbar .right { flex: none; }
.shs .right { margin-left: auto; }
.shs u { width: 17px; height: 17px; background: #dcdcdc; margin-left: 6px; }
.tips { flex: 1; border-top: 1px solid #ccc; color: #aaa; font-size: 16px; line-height: 30px; text-align: center; white-space: nowrap; }
.tips p { padding-right: 8px; }
.tipbtns { display: flex; justify-content: flex-end; gap: 4px; padding: 5px 6px 21px 0; }
.tipbtns span { width: 19px; height: 19px; border: 1px solid #ddd; display: flex; align-items: center; justify-content: center; }
kbd { display: inline-block; height: 30px; font: 15px/27px "DejaVu Sans Mono", monospace; border: 1px solid #ccc; border-bottom-width: 2px; border-radius: 3px; background: #f5f5f5; padding: 0 4px; vertical-align: middle; }
kbd span { font-family: "DejaVu Sans", sans-serif; font-size: 13px; }
.sfoot { height: 26px; flex: none; background: #f3f3f3; border-top: 1px solid #bbb; }
.tv { position: absolute; right: 0; top: 431px; }

/* download shelf */
.dl { height: 48px; flex: none; display: flex; align-items: center; padding-left: 22px; font: 12px/20px "Open Sans", sans-serif; color: #444; }
.file { width: 209px; height: 37px; border-right: 1px solid #d0d0d0; display: flex; align-items: center; }
.file span { margin: 1px 0 0 14px; letter-spacing: -.35px; word-spacing: 1px; }
.upc { width: 10px; height: 6px; margin-left: auto; margin-right: 18px; }
.showall { margin-left: auto; width: 78px; height: 31px; border: 1px solid #d5d7da; border-radius: 4px; text-align: center; line-height: 27px; letter-spacing: -.1px; }
.dx { width: 10px; height: 10px; margin: 0 13px; }

/* taskbar */
.taskbar { height: 40px; flex: none; background: #d4d4d4; display: flex; font-family: "Open Sans", sans-serif; color: #111; }
.start { width: 49px; padding: 12px 0 0 16px; }
.search { width: 343px; background: #fff; border: 1px solid #bcbcbc; border-width: 1px 1px 0 0; display: flex; align-items: center; gap: 11px; padding-left: 11px; font-size: 14px; letter-spacing: -.05px; }
.handle { width: 3px; height: 16px; border: solid #222; border-width: 0 1px; margin: 12px 13px 0 7px; }
.apps { display: flex; }
.apps span { width: 48px; margin-right: 1px; height: 40px; padding: 8px 12px; position: relative; }
.apps svg { width: 24px; height: 24px; }
.run::after { content: ""; position: absolute; left: 4px; right: 4px; bottom: 0; height: 2px; background: #0a78d7; }
.cur { background: #ededed; }
.cur::after { left: 0; right: 0; }
.systray { margin-left: auto; width: 307px; display: flex; align-items: center; font-size: 12px; }
.q { width: 20px; height: 20px; border-radius: 50%; background: #0c8fd6; color: #fff; border: 1px solid #fff; font-size: 14px; line-height: 18px; text-align: center; }
.t1 { margin-left: 14px; } .t2 { margin-left: 11px; } .t3 { margin-left: 12px; } .t4 { margin-left: 10px; } .t5 { margin-left: 8px; }
.lang { margin-left: 8px; letter-spacing: -.5px; }
.clock { margin-left: 12px; width: 58px; font-size: 11.500px; line-height: 18px; text-align: center; letter-spacing: -.35px; }
.t6 { margin: 2px 0 0 18px; }
```
